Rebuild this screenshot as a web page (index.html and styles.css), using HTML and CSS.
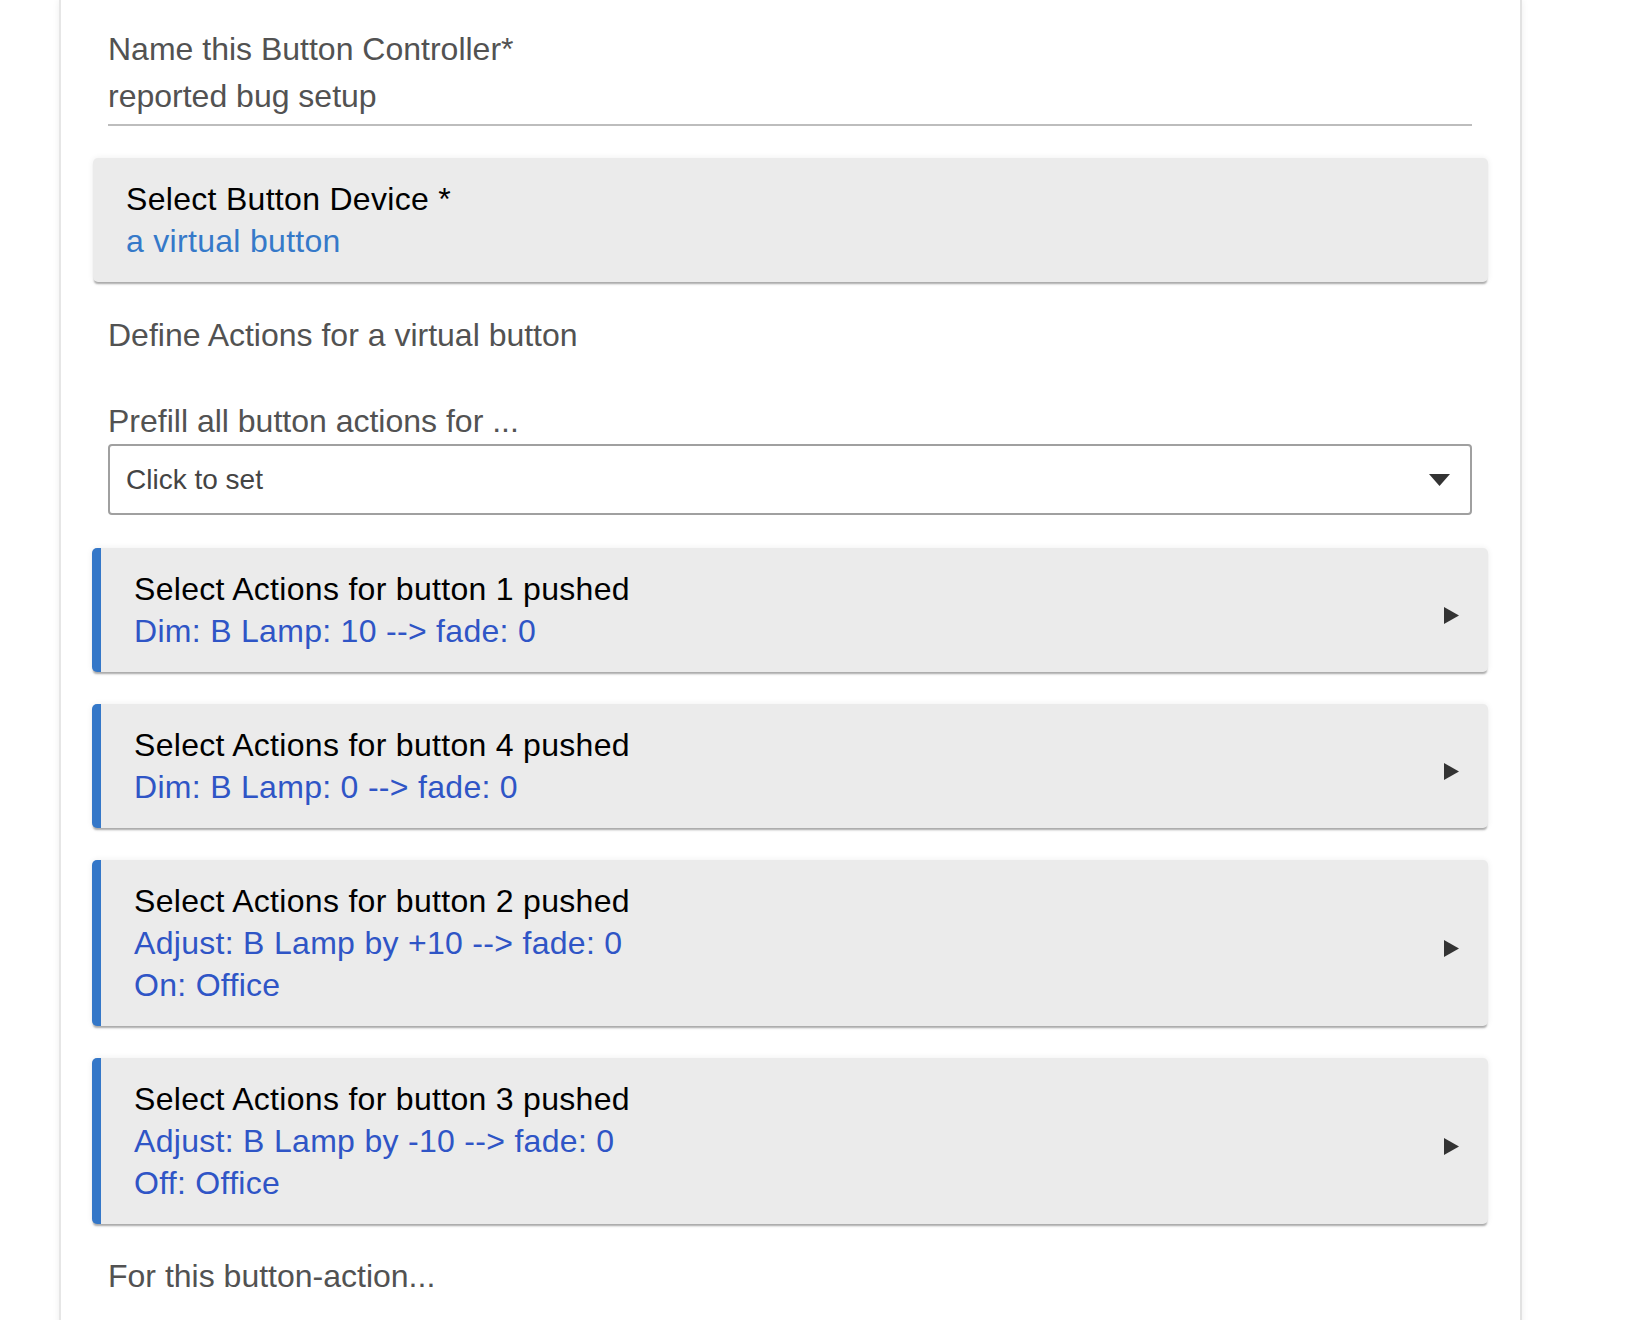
FILE: index.html
```html
<!DOCTYPE html>
<html lang="en">
<head>
    <meta charset="UTF-8">
    <title>Button Controller</title>
    <link rel="stylesheet" href="styles.css">
</head>
<body>

<div class="panel">

    <div class="field">
        <label class="label">Name this Button Controller*</label>
        <div class="text-input">reported bug setup</div>
    </div>

    <div class="card">
        <div class="card-body">
            <div class="card-title">Select Button Device *</div>
            <div class="card-value light">a virtual button</div>
        </div>
    </div>

    <p class="para define">Define Actions for a virtual button</p>

    <p class="para prefill">Prefill all button actions for ...</p>
    <div class="select">
        <span>Click to set</span>
        <svg class="caret" width="21" height="12" viewBox="0 0 21 12"><path d="M0 0 L21 0 L10.5 12 Z" fill="#333"/></svg>
    </div>

    <div class="card accent">
        <div class="card-body">
            <div class="card-title">Select Actions for button 1 pushed</div>
            <div class="card-value">Dim: B Lamp: 10 --&gt; fade: 0</div>
        </div>
        <svg class="arrow" width="15" height="17" viewBox="0 0 15 17"><path d="M0 0 L15 8.5 L0 17 Z" fill="#333"/></svg>
    </div>

    <div class="card accent">
        <div class="card-body">
            <div class="card-title">Select Actions for button 4 pushed</div>
            <div class="card-value">Dim: B Lamp: 0 --&gt; fade: 0</div>
        </div>
        <svg class="arrow" width="15" height="17" viewBox="0 0 15 17"><path d="M0 0 L15 8.5 L0 17 Z" fill="#333"/></svg>
    </div>

    <div class="card accent">
        <div class="card-body">
            <div class="card-title">Select Actions for button 2 pushed</div>
            <div class="card-value">Adjust: B Lamp by +10 --&gt; fade: 0</div>
            <div class="card-value">On: Office</div>
        </div>
        <svg class="arrow" width="15" height="17" viewBox="0 0 15 17"><path d="M0 0 L15 8.5 L0 17 Z" fill="#333"/></svg>
    </div>

    <div class="card accent">
        <div class="card-body">
            <div class="card-title">Select Actions for button 3 pushed</div>
            <div class="card-value">Adjust: B Lamp by -10 --&gt; fade: 0</div>
            <div class="card-value">Off: Office</div>
        </div>
        <svg class="arrow" width="15" height="17" viewBox="0 0 15 17"><path d="M0 0 L15 8.5 L0 17 Z" fill="#333"/></svg>
    </div>

    <p class="para after">For this button-action...</p>

</div>

</body>
</html>
```

FILE: styles.css
```css
body { margin: 0; background-color: #fff; font-family: "Liberation Sans", Arial, sans-serif; overflow: hidden; }

.panel { box-sizing: border-box; margin-left: 59px; width: 1463px; min-height: 1320px; padding: 28px 48px 40px 47px; background-color: #fff; border-left: 2px solid #e6e6e6; border-right: 2px solid #e2e2e2; box-shadow: 0 0 7px rgba(0, 0, 0, 0.07); }

.label { display: block; font-size: 32px; line-height: 42px; color: #525252; }
.text-input { margin-top: 5px; font-size: 32px; line-height: 42px; color: #525252; padding-bottom: 7px; border-bottom: 2px solid #bdbdbd; }

.card { display: flex; align-items: center; margin: 32px -16px 0 -15px; padding: 20px 29px 20px 33px; background-color: #ebebeb; border-radius: 5px; box-shadow: 0 3px 2px -1px rgba(0, 0, 0, 0.32), 0 0 6px rgba(0, 0, 0, 0.07); }
.card.accent { padding-left: 33px; border-left: 9px solid #3477c8; margin-left: -16px; }
.card-body { flex: 1; }
.card-title { font-size: 32px; line-height: 42px; letter-spacing: 0.3px; color: #000; }
.card-value { font-size: 32px; line-height: 42px; letter-spacing: 0.3px; color: #2f55c6; }
.card-value.light { color: #3579c9; }
.arrow { flex: none; margin-top: 10px; }

.para { margin: 0; font-size: 32px; line-height: 42px; color: #525252; }
.define { margin-top: 32px; }
.prefill { margin-top: 44px; }
.after { margin-top: 31px; }

.select { box-sizing: border-box; display: flex; align-items: center; justify-content: space-between; height: 71px; margin-top: 2px; margin-bottom: 33px; padding: 0 20px 0 16px; border: 2px solid #a0a0a0; border-radius: 4px; font-size: 28px; line-height: 36px; color: #444; }
.select + .card { margin-top: 0; }
```
